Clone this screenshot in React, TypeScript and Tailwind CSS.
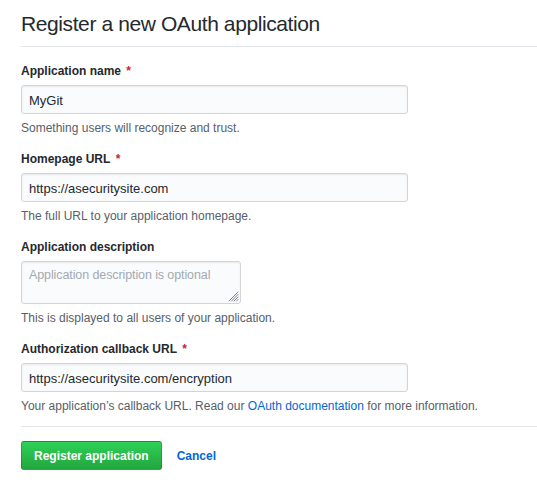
import React from "react";

const font = { fontFamily: '"Liberation Sans", Arial, Helvetica, sans-serif' };

function Label({ children, required }: { children: React.ReactNode; required?: boolean }) {
  return (
    <div className="text-[12px] leading-[18px] font-bold text-[#24292e]">
      {children}
      {required && <span className="ml-[2px] text-[#cb2431]"> *</span>}
    </div>
  );
}

function Note({ children }: { children: React.ReactNode }) {
  return <div className="mt-[5px] text-[12px] leading-[18px] text-[#586069]">{children}</div>;
}

function TextInput({ value }: { value: string }) {
  return (
    <input
      readOnly
      value={value}
      className="mt-[5px] block h-[29px] w-[387px] rounded-[3px] border border-[#d1d5da] bg-[#fafbfc] px-[7px] pt-[2px] text-[13px] text-[#24292e] shadow-[inset_0_1px_2px_rgba(27,31,35,0.075)] outline-none"
      style={font}
    />
  );
}

export default function App() {
  return (
    <div className="min-h-[495px] bg-white pl-[21px]" style={font}>
      <div className="border-b border-[#e1e4e8] pt-[9px] pb-[7px]">
        <h1 className="text-[21px] leading-[30px] font-normal tracking-[-0.4px] text-[#24292e]">
          Register a new OAuth application
        </h1>
      </div>

      <div className="pt-[15px]">
        <Label required>Application name</Label>
        <TextInput value="MyGit" />
        <Note>Something users will recognize and trust.</Note>
      </div>

      <div className="pt-[13px]">
        <Label required>Homepage URL</Label>
        <TextInput value="https://asecuritysite.com" />
        <Note>The full URL to your application homepage.</Note>
      </div>

      <div className="pt-[13px]">
        <Label>Application description</Label>
        <div className="relative mt-[5px] h-[43px] w-[220px]">
          <textarea
            readOnly
            placeholder="Application description is optional"
            className="block h-[43px] w-[220px] resize-none rounded-[3px] border border-[#d1d5da] bg-[#fafbfc] px-[7px] py-[4px] text-[12.5px] leading-[18px] tracking-[-0.1px] text-[#24292e] shadow-[inset_0_1px_2px_rgba(27,31,35,0.075)] outline-none placeholder:text-[#a3aab1]"
            style={font}
          />
          <svg
            className="absolute right-[2px] bottom-[2px]"
            width="11"
            height="11"
            viewBox="0 0 11 11"
          >
            <g stroke="#6a737d" strokeWidth="0.9" strokeLinecap="round">
              <line x1="10" y1="1" x2="1" y2="10" />
              <line x1="10" y1="3.5" x2="3.5" y2="10" />
              <line x1="10" y1="6" x2="6" y2="10" />
              <line x1="10" y1="8.5" x2="8.5" y2="10" />
            </g>
          </svg>
        </div>
        <Note>This is displayed to all users of your application.</Note>
      </div>

      <div className="pt-[13px]">
        <Label required>Authorization callback URL</Label>
        <TextInput value="https://asecuritysite.com/encryption" />
        <Note>
          Your application’s callback URL. Read our{" "}
          <a className="text-[#0366d6]">OAuth documentation</a> for more information.
        </Note>
      </div>

      <div className="mt-[11px] border-t border-[#e1e4e8] pt-[14px]">
        <div className="flex items-center gap-[15px]">
          <button
            className="h-[29px] rounded-[3px] border border-[rgba(27,31,35,0.2)] bg-gradient-to-b from-[#2fd057] to-[#22a73e] px-[12px] text-[12px] font-bold text-white"
            style={font}
          >
            Register application
          </button>
          <a className="text-[12px] font-bold text-[#0366d6]">Cancel</a>
        </div>
      </div>
    </div>
  );
}
